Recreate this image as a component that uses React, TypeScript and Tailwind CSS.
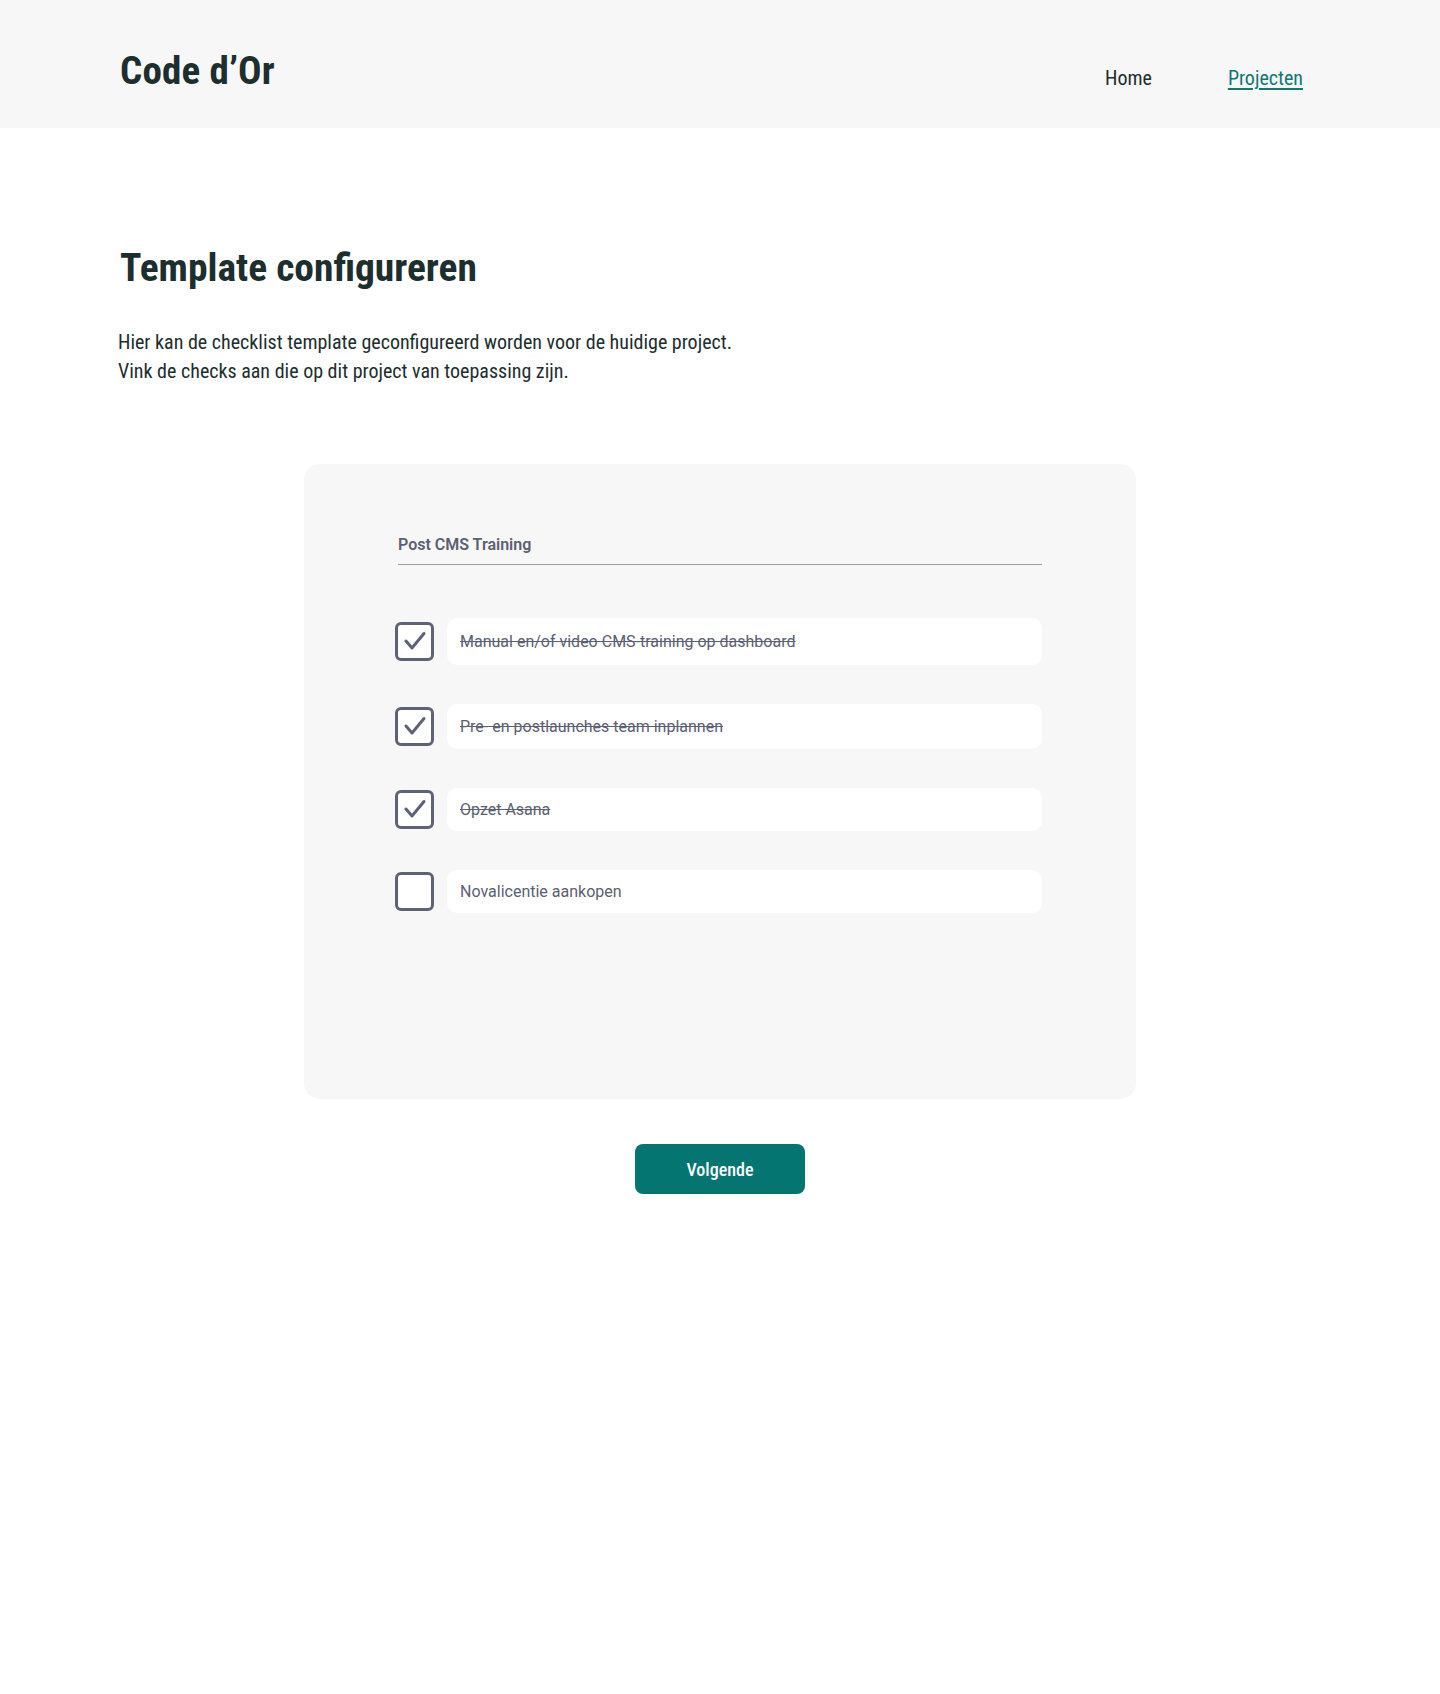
import { useState } from "react";

const items = [
    { id: 1, label: "Manual en/of video CMS-training op dashboard", checked: true, h: "h-[47px]" },
    { id: 2, label: "Pre- en postlaunches team inplannen", checked: true, h: "h-[45px]" },
    { id: 3, label: "Opzet Asana", checked: true, h: "h-[43px]" },
    { id: 4, label: "Novalicentie aankopen", checked: false, h: "h-[43px]" },
];

const condensed = "font-['Roboto_Condensed','Liberation_Sans_Narrow',Roboto,sans-serif]";

const CheckBox = ({ checked, onClick }: { checked: boolean; onClick: () => void }) => (
    <button
        onClick={onClick}
        className="w-[39px] h-[39px] shrink-0 rounded-[6px] border-[3px] border-[#5e6276] bg-white flex items-center justify-center"
        aria-label={checked ? "Uitvinken" : "Aanvinken"}
    >
        {checked && (
            <svg width="33" height="33" viewBox="0 0 33 33" fill="none">
                <path d="M8 16l6 7L26 8.5" stroke="#5e6276" strokeWidth="3" strokeLinecap="round" strokeLinejoin="round" />
            </svg>
        )}
    </button>
);

export default function App() {
    const [checks, setChecks] = useState(items.map((i) => i.checked));

    const toggle = (idx: number) => setChecks((c) => c.map((v, i) => (i === idx ? !v : v)));

    return (
        <div className="min-h-[1694px] bg-white text-[#1c2e2e] font-['Roboto',sans-serif]">
            <header className="bg-[#f7f7f7] h-[128px]">
                <div className="max-w-[1200px] mx-auto h-full flex items-center justify-between">
                    <span className={`${condensed} text-[39px] font-bold tracking-[0.2px] mt-[14px]`}>Code d’Or</span>
                    <nav className={`${condensed} flex gap-[76px] text-[20px] mt-[28px] pr-[17px]`}>
                        <a href="#" className="text-[#1c2e2e]">Home</a>
                        <a href="#" className="text-[#0e7872] underline underline-offset-[3px]">Projecten</a>
                    </nav>
                </div>
            </header>

            <main className="max-w-[1200px] mx-auto pt-[115px]">
                <h1 className={`${condensed} text-[39.5px] font-bold leading-[50px]`}>Template configureren</h1>
                <p className={`${condensed} text-[20px] leading-[29px] mt-[35px] -ml-[2px]`}>
                    Hier kan de checklist template geconfigureerd worden voor de huidige project.
                    <br />
                    Vink de checks aan die op dit project van toepassing zijn.
                </p>

                <section className="w-[832px] h-[635px] mx-auto mt-[78px] bg-[#f7f7f7] rounded-[16px] px-[94px] pt-[70px]">
                    <div className="border-b-[1.5px] border-[#9a9ca6] pb-[8px]">
                        <h2 className="text-[16px] font-semibold text-[#5b6072] leading-[22px]">Post CMS Training</h2>
                    </div>

                    <ul className="mt-[53px] flex flex-col gap-[39px]">
                        {items.map((item, idx) => (
                            <li key={item.id} className="flex items-center gap-[13px] -ml-[3px]">
                                <CheckBox checked={checks[idx]} onClick={() => toggle(idx)} />
                                <div className={`flex-1 ${item.h} bg-white rounded-[10px] flex items-center px-[13px]`}>
                                    <span className={`text-[16px] text-[#5b6072] ${checks[idx] ? "line-through" : ""}`}>{item.label}</span>
                                </div>
                            </li>
                        ))}
                    </ul>
                </section>

                <div className="flex justify-center mt-[45px]">
                    <button className={`${condensed} w-[170px] h-[50px] rounded-[8px] bg-[#047571] text-white text-[18px] font-medium`}>
                        Volgende
                    </button>
                </div>
            </main>
        </div>
    );
}
